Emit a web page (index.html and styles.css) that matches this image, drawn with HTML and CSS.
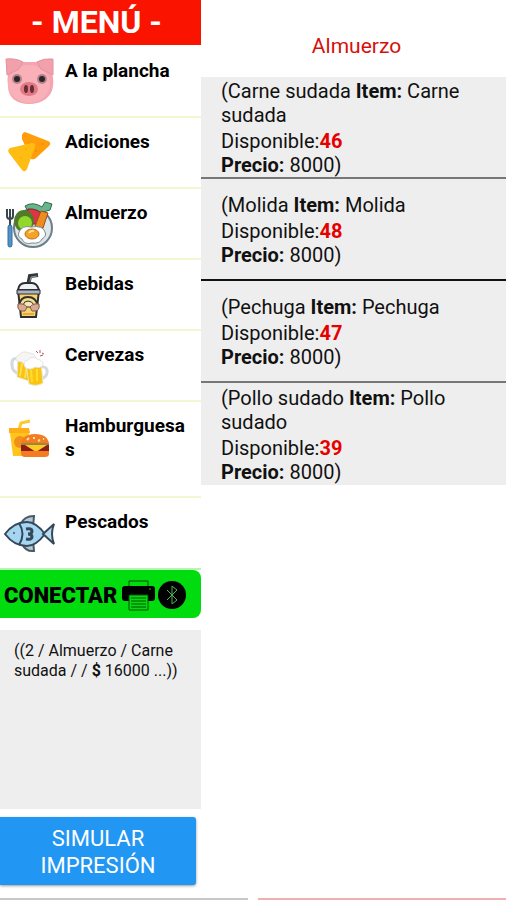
FILE: index.html
```html
<!DOCTYPE html>
<html lang="es">
	<head>
		<meta charset="UTF-8" />
		<meta name="viewport" content="width=device-width, initial-scale=1.0" />
		<title>Menú</title>
		<link rel="stylesheet" href="styles.css">
	</head>
	<body>
		<div class="container">
			<aside class="sidebar">
				<h1>- MENÚ -</h1>
				<nav class="menu">
					<a href="#plancha">
						<svg viewBox="0 0 56 56">
							<path d="M5 5q8-2 15 2l15 0q8-4 17-2l-1 14q2 4 1 12c-1 11-11 18-24 18S7 42 7 31q-1-7 0-12z" fill="#f5a5b0"/>
							<ellipse cx="28" cy="29" rx="21" ry="19" fill="#f9b0b8"/>
							<path d="M5 4q10-1 17 3l-4 7-12 6zM52 4q-9-1-16 3l4 7 12 6z" fill="#f3a0ad" stroke="#e4929f"/>
							<circle cx="16" cy="24" r="5" fill="#b38289"/>
							<circle cx="16" cy="24" r="3" fill="#28262a"/>
							<circle cx="41" cy="24" r="5" fill="#b38289"/>
							<circle cx="41" cy="24" r="3" fill="#28262a"/>
							<ellipse cx="28" cy="34" rx="9" ry="7" fill="#e37884"/>
							<ellipse cx="25" cy="34" rx="2" ry="4" fill="#613039"/>
							<ellipse cx="31" cy="34" rx="2" ry="4" fill="#613039"/>
						</svg>
						<span>A la plancha</span>
					</a>
					<a href="#adiciones">
						<svg viewBox="1 -1 56 56">
							<path d="M25 5l23 9q4 2 1 5L36 31q-2 2-5 1l-9-20q-1-6 3-7z" fill="#ff9d0a"/>
							<path d="M10 21l22-5q4 0 3 4l-8 22q-2 4-5 1L9 26q-2-3 1-5z" fill="#ffbd13"/>
							<path d="M42 17h2M35 24h2" stroke="#f59000" stroke-width="2"/>
							<path d="M25 22h2M20 31h2" stroke="#fbb00a" stroke-width="2"/>
						</svg>
						<span>Adiciones</span>
					</a>
					<a href="#almuerzo">
						<svg viewBox="1 -3 56 56">
							<circle cx="33" cy="28" r="19" fill="#dce7ea" stroke="#6e7f88" stroke-width="2"/>
							<path d="M25 6q8-5 17 1l3-5 7 2-2 6-7 2-14 1z" fill="#67b68a" stroke="#2d6656"/>
							<path d="M28 9q10-1 16 7l-5 8H25z" fill="#de3544" stroke="#78232b"/>
							<path d="M41 11l7 2-5 15-8-2z" fill="#ef8c20" stroke="#96511b"/>
							<ellipse cx="24" cy="21" rx="10" ry="11" fill="#517b2b"/>
							<ellipse cx="25" cy="23" rx="7" ry="7" fill="#91d82b"/>
							<path d="M19 32q3-7 12-5 12-2 14 5 2 4-3 7-2 5-10 4-8 2-10-4-5-2-3-7z" fill="#fff" stroke="#7b8b90"/>
							<ellipse cx="32" cy="34" rx="7" ry="5" fill="#f4a323" stroke="#b96d22"/>
							<path d="M29 33q2-3 5-2" fill="none" stroke="#ffe19a" stroke-width="2"/>
							<path d="M7 9v7q0 3 3 3t3-3V9M10 9v17" fill="none" stroke="#38464e" stroke-width="2"/>
							<rect x="8" y="25" width="4" height="22" rx="2" fill="#4b95cc" stroke="#386d96"/>
						</svg>
						<span>Almuerzo</span>
					</a>
					<a href="#bebidas">
						<svg viewBox="0 -4 56 56">
							<path d="M27 14l2-10 8-1" fill="none" stroke="#32343b" stroke-width="4"/>
							<path d="M28 13l2-8 6-1" fill="none" stroke="#8a9299"/>
							<path d="M17 18l3 27h15l3-27z" fill="#f7d36c" stroke="#302e32" stroke-width="2"/>
							<path d="M17 18q1-7 7-7h7q5 0 7 7z" fill="#edf2f6" stroke="#302e32" stroke-width="2"/>
							<path d="M16 18h23v4H16z" fill="#a9b3c1" stroke="#302e32"/>
							<path d="M18 34q1-9 9-9t10 9z" fill="#f7dd86" stroke="#302e32" stroke-width="2"/>
							<path d="M22 33q1-4 5-4t6 4l-2 2h-7z" fill="#f4e6bc" stroke="#302e32"/>
							<path d="M17 32q6-1 9 3l-2 4h-3q-5 0-4-7zM38 32q-6-1-9 3l2 4h3q5 0 4-7z" fill="#dba98f" stroke="#7a5b50"/>
							<path d="M22 42h11" stroke="#e0ac48" stroke-width="2"/>
						</svg>
						<span>Bebidas</span>
					</a>
					<a href="#cervezas">
						<svg viewBox="0 -7 56 56">
							<path d="M18 13q-8-2-7 6 0 7 8 9" fill="none" stroke="#d3d9dd" stroke-width="3"/>
							<path d="M17 11l17 4-6 20-12-4z" fill="#f8c319" stroke="#e9e5d3"/>
							<path d="M21 17l-2 13M26 18l-2 14" stroke="#ffe040" stroke-width="2"/>
							<path d="M16 15q-3-4 2-6 4-5 10-2 7 0 7 7-1 4-6 3-5 3-8-1z" fill="#f5f5f3" stroke="#e4e4e2"/>
							<path d="M40 21q7-1 6 6-1 5-7 6" fill="none" stroke="#d3d9dd" stroke-width="3"/>
							<path d="M25 19l15-3 2 21q-6 4-14 1z" fill="#f9c511" stroke="#eee4c4"/>
							<path d="M30 24l1 12M36 23v12" stroke="#ffdc30" stroke-width="2"/>
							<path d="M24 21q-3-5 3-7 4-5 9-1 6 1 6 6-3 4-8 2-5 4-10 0z" fill="#fff" stroke="#e4e4e2"/>
							<path d="M35 5l2 2M39 4v3M39 10l3-1M41 7l2 1" stroke="#bb5362"/>
						</svg>
						<span>Cervezas</span>
					</a>
					<a href="#hamburguesas" class="tall">
						<svg viewBox="1 -10 56 56">
							<path d="M19 10l2-7 9-2" fill="none" stroke="#ffc929" stroke-width="3"/>
							<path d="M10 13h19l-2 23H13z" fill="#ffc51b"/>
							<path d="M9 8h20l1 5H9z" fill="#ffad19"/>
							<circle cx="20" cy="22" r="6" fill="#f28f1c"/>
							<path d="M21 24q1-10 14-10t14 10z" fill="#f47d24"/>
							<path d="M27 20l2-2M33 18h2M38 21l2-1M43 19h1" stroke="#ffe1a0" stroke-width="2"/>
							<path d="M21 23h28v2H21z" fill="#9a8a35"/>
							<path d="M21 25h28v7H21z" fill="#8e1d17"/>
							<path d="M25 25h22l-11 7z" fill="#ffca28"/>
							<path d="M21 31h28v3q0 3-4 3H25q-4 0-4-4z" fill="#f47b21"/>
						</svg>
						<span>Hamburguesas</span>
					</a>
					<a href="#pescados">
						<svg viewBox="0 -5 56 56">
							<path d="M20 13q3-8 13-8l-1 11zM21 33q4 8 12 7l-1-11z" fill="#b4c9d4" stroke="#4b5a6a" stroke-width="2"/>
							<path d="M4 23q9-12 22-12 9 0 18 12-9 12-18 12Q13 35 4 23z" fill="#a5d6f1" stroke="#35485b" stroke-width="2"/>
							<path d="M42 23l11-10q-4 10 0 20z" fill="#b7dced" stroke="#35485b" stroke-width="2"/>
							<path d="M18 12q7 11 0 22" fill="none" stroke="#35485b" stroke-width="2"/>
							<circle cx="13" cy="22" r="1" fill="#40566a"/>
							<path d="M25 18q6-1 6 2t-4 3q4 0 4 3t-6 2" fill="none" stroke="#35485b" stroke-width="3"/>
						</svg>
						<span>Pescados</span>
					</a>
				</nav>
				<button type="button" class="connect">
					CONECTAR
					<svg class="printer" viewBox="0 0 34 32">
						<path d="M8 7V2h19v5" fill="none" stroke="#064c06"/>
						<rect x="1" y="7" width="33" height="15" rx="3"/>
						<path d="M8 16h19v15H8z" fill="#00dc0d" stroke="#064c06"/>
						<path d="M10 19h15M10 22h15M10 25h15M10 28h15" stroke="#064c06"/>
						<circle cx="29" cy="10" r="1" fill="#087b0d"/>
					</svg>
					<svg class="bluetooth" viewBox="0 0 28 28">
						<circle cx="14" cy="14" r="14"/>
						<path d="M9 9l10 10-5 4V5l5 4L9 19" fill="none" stroke="#49b951"/>
					</svg>
				</button>
				<div class="order">((2 / Almuerzo / Carne sudada / / <b>$</b> 16000 ...))</div>
				<button type="button" class="print">SIMULAR IMPRESIÓN</button>
			</aside>

			<main class="content">
				<h2>Almuerzo</h2>
				<ul class="items">
					<li>
						<p>(Carne sudada <b>Item:</b> Carne sudada</p>
						<p class="stock">Disponible:<b>46</b></p>
						<p><b>Precio:</b> 8000)</p>
					</li>
					<li>
						<p>(Molida <b>Item:</b> Molida</p>
						<p class="stock">Disponible:<b>48</b></p>
						<p><b>Precio:</b> 8000)</p>
					</li>
					<li>
						<p>(Pechuga <b>Item:</b> Pechuga</p>
						<p class="stock">Disponible:<b>47</b></p>
						<p><b>Precio:</b> 8000)</p>
					</li>
					<li>
						<p>(Pollo sudado <b>Item:</b> Pollo sudado</p>
						<p class="stock">Disponible:<b>39</b></p>
						<p><b>Precio:</b> 8000)</p>
					</li>
				</ul>
			</main>
		</div>
		<footer class="bottom">
			<div class="bar"></div>
			<div class="bar red"></div>
		</footer>
	</body>
</html>
```
FILE: styles.css
```css
* {
	box-sizing: border-box;
}
body {
	font-family: Roboto, Arial, sans-serif;
	margin: 0;
	background-color: #fff;
	color: #111;
	min-height: 100vh;
	display: flex;
	flex-direction: column;
}
h1, h2, p, ul {
	margin: 0;
	padding: 0;
}
button {
	font-family: inherit;
	border: none;
	cursor: pointer;
}
.container {
	display: grid;
	grid-template-columns: 201fr 305fr;
	flex: 1;
}

/* Left column */
.sidebar {
	min-width: 0;
}
h1 {
	background-color: #fa1400;
	color: #fff;
	font-size: 32px;
	line-height: 45px;
	text-align: center;
	padding-right: 8px;
}
.menu {
	padding-top: 2px;
}
.menu a {
	display: flex;
	align-items: flex-start;
	gap: 8px;
	min-height: 71px;
	padding: 8px 12px 0 1px;
	border-bottom: 2px solid #f3f7cf;
	color: #000;
	font-size: 19px;
	font-weight: bold;
	line-height: 24px;
	text-decoration: none;
}
.menu a.tall {
	min-height: 96px;
}
.menu a:last-child {
	min-height: 72px;
	border-color: #b5f5b5;
}
.menu svg {
	width: 56px;
	height: 56px;
	flex-shrink: 0;
}
.menu span {
	padding-top: 4px;
	min-width: 0;
	overflow-wrap: anywhere;
}
.connect {
	display: flex;
	align-items: center;
	width: 100%;
	height: 48px;
	padding: 2px 4px 0;
	background-color: #00dc0d;
	border-radius: 0 8px 8px 0;
	color: #000;
	font-size: 22px;
	font-weight: 900;
}
.printer {
	width: 34px;
	height: 32px;
	margin-left: 4px;
}
.bluetooth {
	width: 28px;
	height: 28px;
	margin-left: 3px;
}
.order {
	height: 179px;
	margin-top: 12px;
	padding: 11px 14px;
	background-color: #eee;
	font-size: 16px;
	line-height: 20px;
}
.print {
	display: block;
	width: calc(100% - 5px);
	margin-top: 8px;
	padding: 8px 30px 6px;
	background-color: #2196f3;
	border-radius: 0 3px 3px 0;
	box-shadow: 0 1px 3px rgba(0, 0, 0, 0.4);
	color: #fff;
	font-size: 22px;
	line-height: 27px;
}

/* Right column */
h2 {
	padding: 32px 0 17px 6px;
	color: #d6110c;
	font-size: 21px;
	font-weight: normal;
	line-height: 28px;
	text-align: center;
}
.items {
	list-style: none;
}
.items li {
	display: flex;
	flex-direction: column;
	justify-content: center;
	min-height: 102px;
	padding: 2px 20px 0;
	background-color: #eee;
	border-bottom: 2px solid #777;
	font-size: 20px;
	line-height: 24px;
}
.items li:nth-child(2) {
	border-color: #111;
}
.items li:last-child {
	border-bottom: none;
}
.stock {
	padding-top: 2px;
}
.stock b {
	color: #e60000;
}

.bottom {
	display: grid;
	grid-template-columns: 1fr 1fr;
	gap: 10px;
}
.bar {
	height: 2px;
	background-color: #c8c8c8;
}
.bar.red {
	background-color: #eeb0b0;
}
```
